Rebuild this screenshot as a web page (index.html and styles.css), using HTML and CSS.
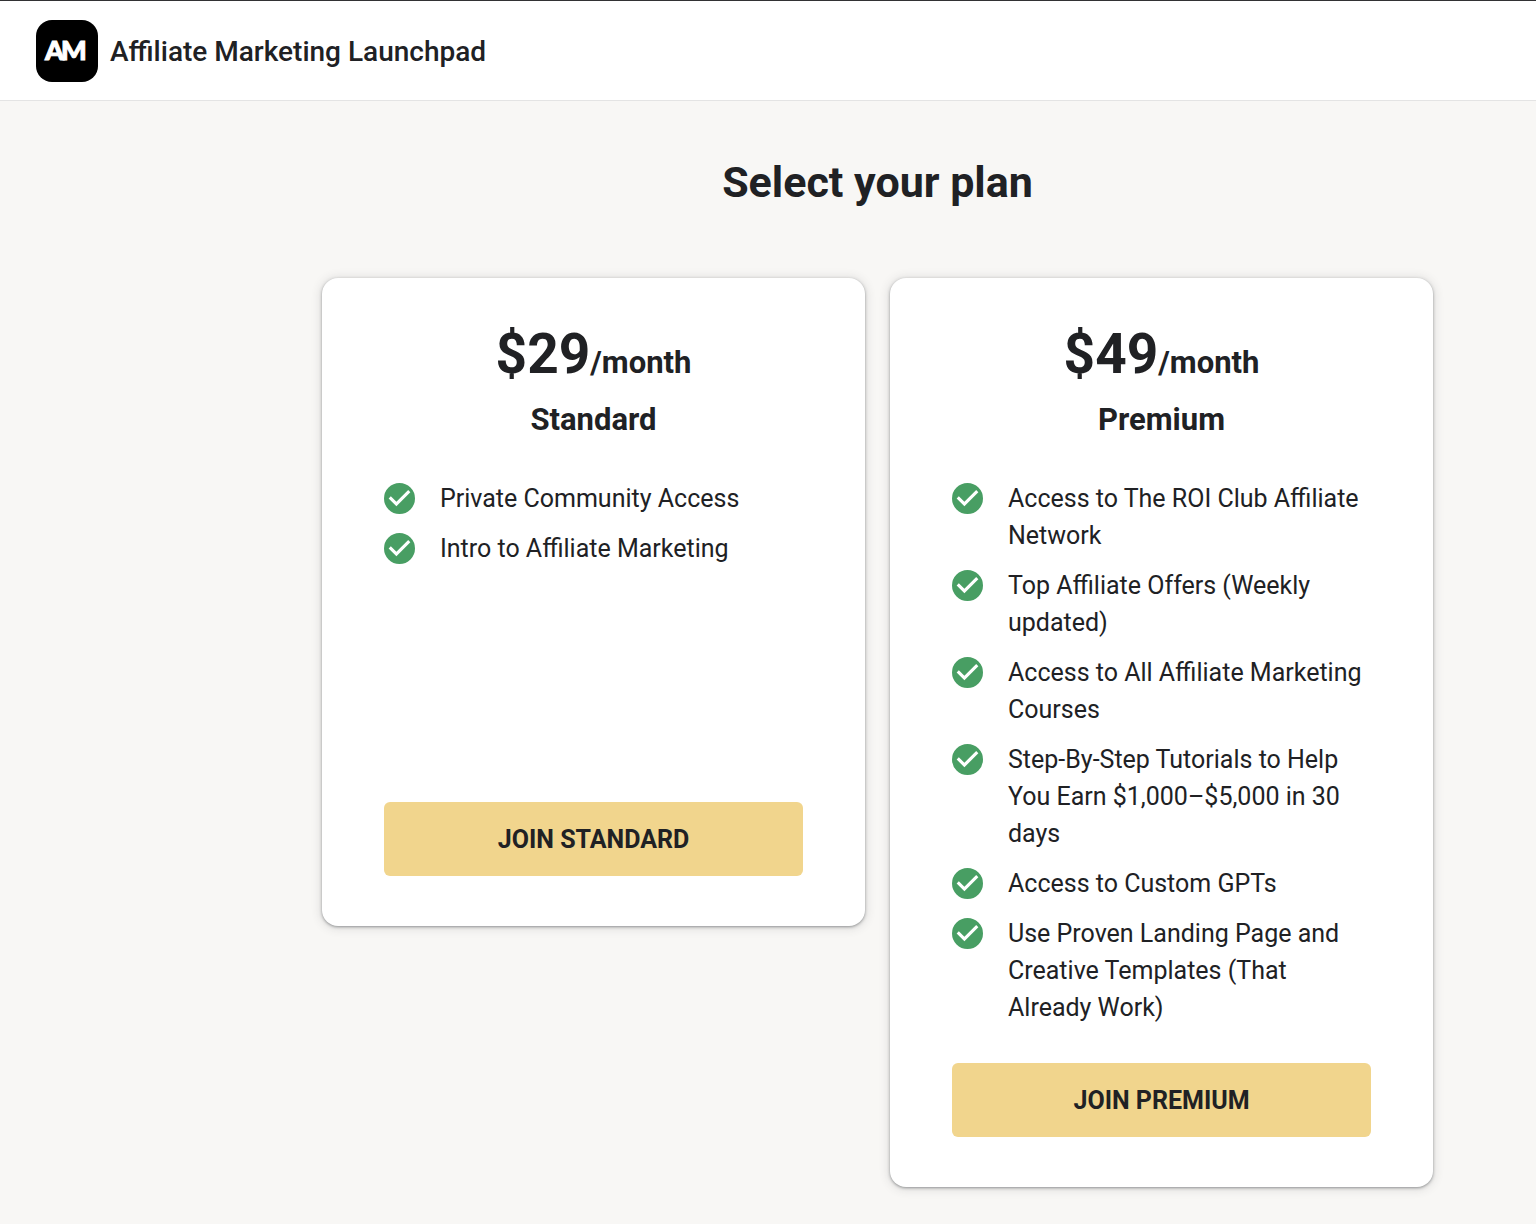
FILE: index.html
```html
<!DOCTYPE html>
<html lang="en">
<head>
<meta charset="utf-8">
<meta name="viewport" content="width=device-width, initial-scale=1">
<title>Affiliate Marketing Launchpad</title>
<link rel="stylesheet" href="styles.css">
</head>
<body>
<svg class="sprite" aria-hidden="true">
  <symbol id="check" viewBox="0 0 20 20">
    <path d="M10 0a10 10 0 1 0 0 20 10 10 0 0 0 0-20zM8 15L3 10l1.410-1.410L8 12.170l7.590-7.590L17 6z"/>
  </symbol>
</svg>
<header class="site-header">
  <svg class="logo" viewBox="0 0 62 62" aria-hidden="true">
    <rect width="62" height="62" rx="16"/>
    <text class="logo-letter" x="9" y="40">A</text>
    <text class="logo-letter" x="25" y="40">M</text>
  </svg>
  <span class="site-name">Affiliate Marketing Launchpad</span>
</header>
<main class="plans-page">
  <h1 class="page-title">Select your plan</h1>
  <div class="plans">
    <section class="card">
      <p class="price">$29<span class="period">/month</span></p>
      <h2 class="plan-name">Standard</h2>
      <ul class="features">
        <li class="feature"><svg class="check"><use href="#check"/></svg><span>Private Community Access</span></li>
        <li class="feature"><svg class="check"><use href="#check"/></svg><span>Intro to Affiliate Marketing</span></li>
      </ul>
      <button class="join" type="button">JOIN STANDARD</button>
    </section>
    <section class="card">
      <p class="price">$49<span class="period">/month</span></p>
      <h2 class="plan-name">Premium</h2>
      <ul class="features">
        <li class="feature"><svg class="check"><use href="#check"/></svg><span>Access to The ROI Club Affiliate Network</span></li>
        <li class="feature"><svg class="check"><use href="#check"/></svg><span>Top Affiliate Offers (Weekly updated)</span></li>
        <li class="feature"><svg class="check"><use href="#check"/></svg><span>Access to All Affiliate Marketing Courses</span></li>
        <li class="feature"><svg class="check"><use href="#check"/></svg><span>Step-By-Step Tutorials to Help You Earn $1,000–$5,000 in 30 days</span></li>
        <li class="feature"><svg class="check"><use href="#check"/></svg><span>Access to Custom GPTs</span></li>
        <li class="feature"><svg class="check"><use href="#check"/></svg><span>Use Proven Landing Page and Creative Templates (That Already Work)</span></li>
      </ul>
      <button class="join" type="button">JOIN PREMIUM</button>
    </section>
  </div>
</main>
</body>
</html>
```
FILE: styles.css
```css
* {
  box-sizing: border-box;
}

body {
  margin: 0;
  background: #f8f7f5;
  color: #202124;
  font-family: Roboto, "Liberation Sans", sans-serif;
  font-size: 25px;
  line-height: 37px;
}

.sprite {
  display: none;
}

.site-header {
  display: flex;
  align-items: center;
  gap: 12px;
  padding: 19px 36px 18px;
  background: #fff;
  border-top: 1px solid #323234;
  border-bottom: 1px solid #e4e4e4;
}

.logo {
  flex: none;
  width: 62px;
  height: 62px;
}

.logo-letter {
  fill: #fff;
  stroke: #fff;
  stroke-width: 1px;
  font-family: Lato, sans-serif;
  font-size: 27px;
  font-weight: 900;
}

.site-name {
  font-size: 28px;
  font-weight: 500;
}

.plans-page {
  padding: 48px 103px 37px 322px;
}

.page-title {
  margin: 0 0 63px;
  font-size: 43px;
  font-weight: 700;
  line-height: 66px;
  text-align: center;
}

.plans {
  display: flex;
  align-items: flex-start;
  gap: 25px;
}

.card {
  display: flex;
  flex: 1;
  flex-direction: column;
  padding: 37px 62px 50px;
  border-radius: 16px;
  background: #fff;
  box-shadow: 0 1px 3px rgba(60, 64, 67, 0.5), 0 1px 10px 2px rgba(60, 64, 67, 0.13);
}

.price {
  margin: 0;
  font-size: 55px;
  font-weight: 700;
  line-height: 78px;
  text-align: center;
}

.period {
  font-size: 31px;
  line-height: 37px;
}

.plan-name {
  margin: 4px 0 0;
  font-size: 31px;
  font-weight: 700;
  line-height: 46px;
  text-align: center;
}

.features {
  display: flex;
  flex-direction: column;
  gap: 13px;
  min-height: 285px;
  margin: 37px 0;
  padding: 0;
  list-style: none;
}

.feature {
  display: flex;
  align-items: flex-start;
  gap: 25px;
}

.check {
  flex: none;
  width: 31px;
  height: 31px;
  margin-top: 3px;
  fill: #489e63;
}

.join {
  height: 74px;
  border: 0;
  border-radius: 6px;
  background: #f1d58d;
  color: #202124;
  font: inherit;
  font-weight: 700;
  cursor: pointer;
}
```
